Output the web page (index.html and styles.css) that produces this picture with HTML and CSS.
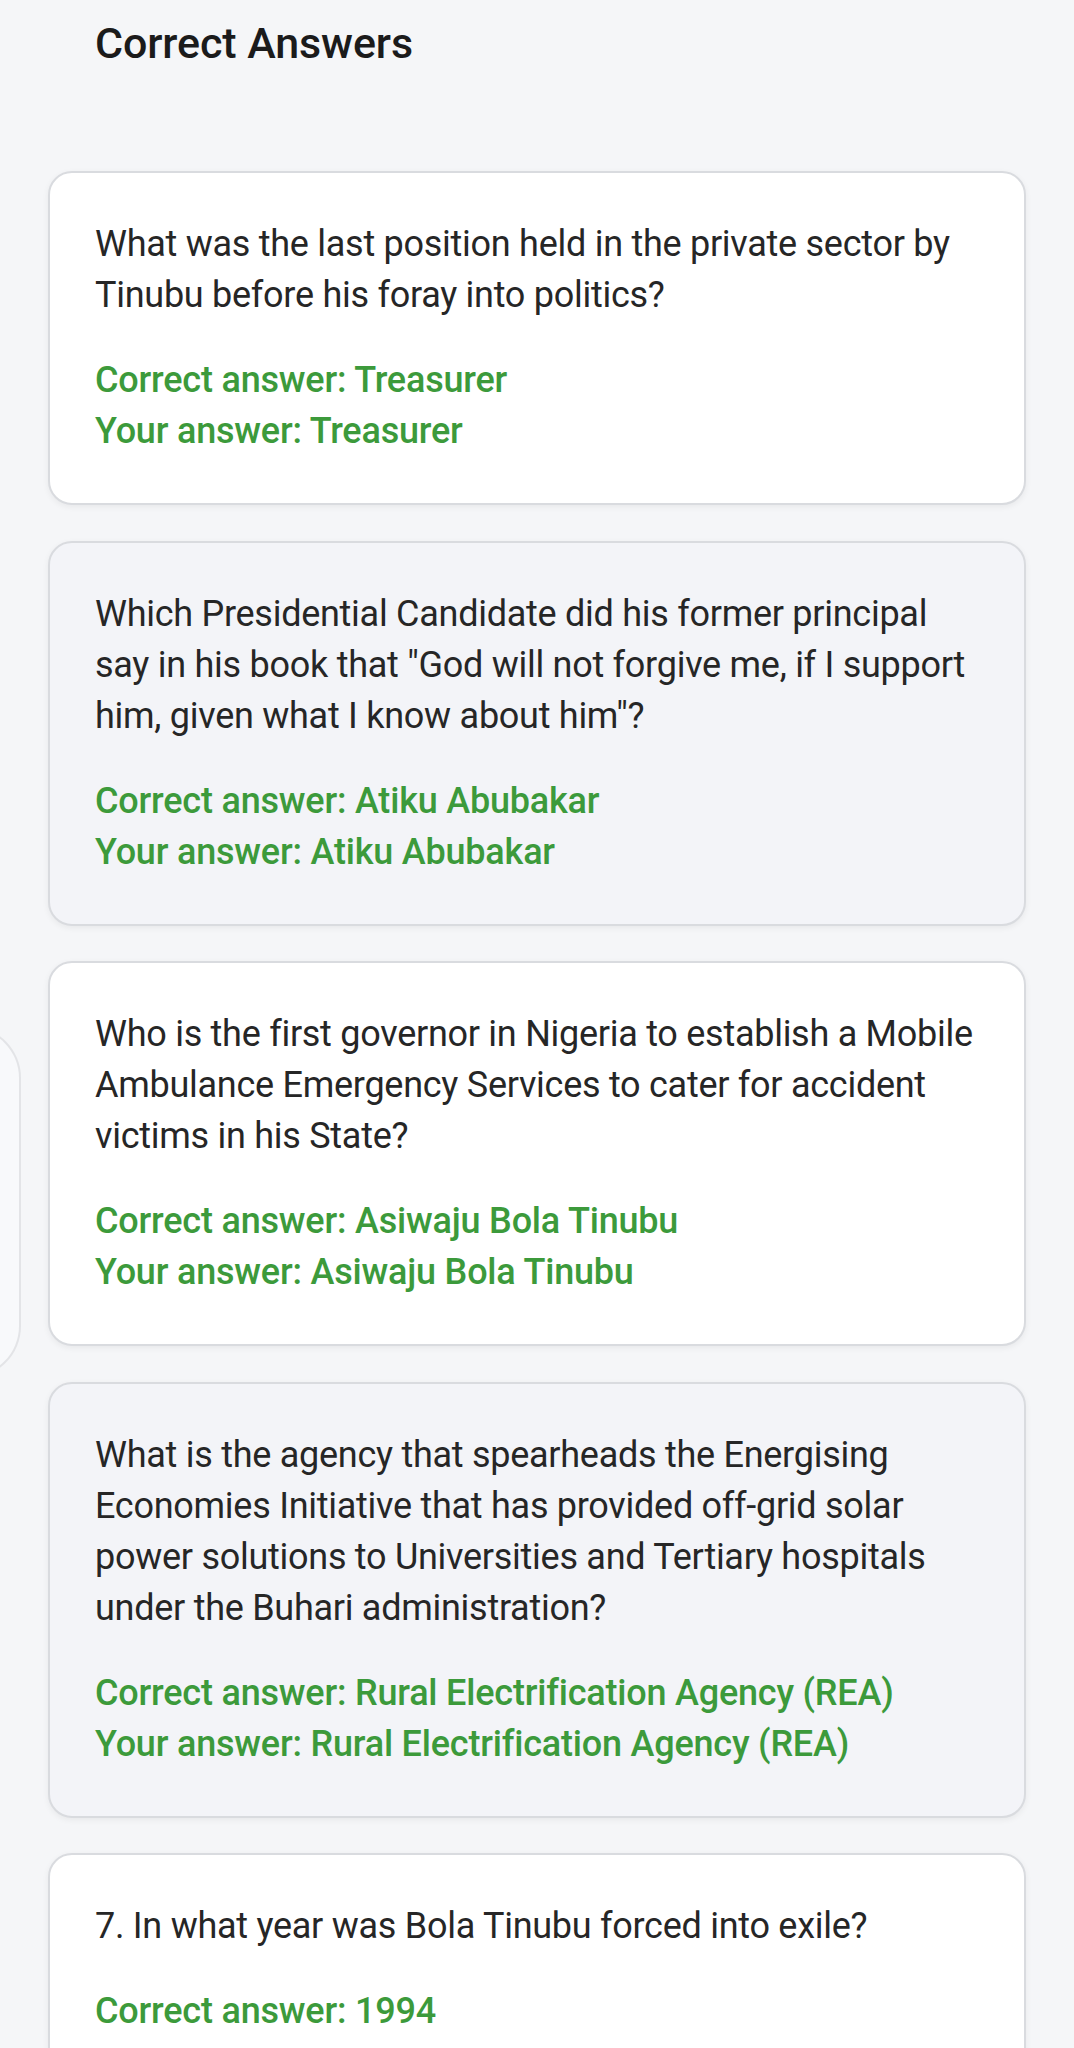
FILE: index.html
```html
<!DOCTYPE html>
<html lang="en">
<head>
<meta charset="utf-8">
<title>Correct Answers</title>
<link rel="stylesheet" href="styles.css">
</head>
<body>
<div class="page">
  <div class="edge-ghost" aria-hidden="true"></div>
  <h1 class="title">Correct Answers</h1>
  <div class="cards">
    <div class="card">
      <p class="question">What was the last position held in the private sector by Tinubu before his foray into politics?</p>
      <div class="answers">
        <p class="answer">Correct answer: Treasurer</p>
        <p class="answer">Your answer: Treasurer</p>
      </div>
    </div>
    <div class="card card-alt">
      <p class="question">Which Presidential Candidate did his former principal say in his book that "God will not forgive me, if I support him, given what I know about him"?</p>
      <div class="answers">
        <p class="answer">Correct answer: Atiku Abubakar</p>
        <p class="answer">Your answer: Atiku Abubakar</p>
      </div>
    </div>
    <div class="card">
      <p class="question">Who is the first governor in Nigeria to establish a Mobile Ambulance Emergency Services to cater for accident victims in his State?</p>
      <div class="answers">
        <p class="answer">Correct answer: Asiwaju Bola Tinubu</p>
        <p class="answer">Your answer: Asiwaju Bola Tinubu</p>
      </div>
    </div>
    <div class="card card-alt">
      <p class="question">What is the agency that spearheads the Energising Economies Initiative that has provided off-grid solar power solutions to Universities and Tertiary hospitals under the Buhari administration?</p>
      <div class="answers">
        <p class="answer">Correct answer: Rural Electrification Agency (REA)</p>
        <p class="answer">Your answer: Rural Electrification Agency (REA)</p>
      </div>
    </div>
    <div class="card">
      <p class="question">7. In what year was Bola Tinubu forced into exile?</p>
      <div class="answers">
        <p class="answer">Correct answer: 1994</p>
        <p class="answer">Your answer: 1994</p>
      </div>
    </div>
  </div>
</div>
</body>
</html>
```

FILE: styles.css
```css
html, body {
  margin: 0;
  padding: 0;
  background: #f5f6f8;
}

body {
  font-family: Roboto, "Noto Sans", "Liberation Sans", sans-serif;
  color: #222;
  overflow: hidden;
}

.page {
  position: relative;
  padding: 18px 48px 0 48px;
  min-height: 2048px;
  box-sizing: border-box;
}

.edge-ghost {
  position: absolute;
  left: -90px;
  top: 1026px;
  width: 109px;
  height: 348px;
  border: 2px solid #e3e4e7;
  border-left: none;
  border-radius: 0 52px 52px 0;
  background: #f8f9fb;
}

.title {
  margin: 0;
  padding-left: 47px;
  font-size: 43px;
  line-height: 50px;
  font-weight: 500;
  letter-spacing: -0.1px;
  color: #1b1b1b;
}

.cards {
  margin-top: 103px;
  display: flex;
  flex-direction: column;
  gap: 35.5px;
}

.card {
  background: #ffffff;
  border: 2px solid #d9dbdf;
  border-radius: 24px;
  padding: 46px 40px 46px 45px;
  box-shadow: 0 2px 6px rgba(0, 0, 0, 0.06);
}

.card-alt {
  background: #f3f4f8;
}

.question {
  margin: 0;
  font-size: 36px;
  line-height: 51px;
  font-weight: 400;
  letter-spacing: -0.27px;
  color: #262626;
}

.answers {
  margin-top: 34px;
}

.answer {
  margin: 0;
  font-size: 36px;
  line-height: 51px;
  font-weight: 500;
  letter-spacing: -0.2px;
  color: #3c9a3b;
}
```
